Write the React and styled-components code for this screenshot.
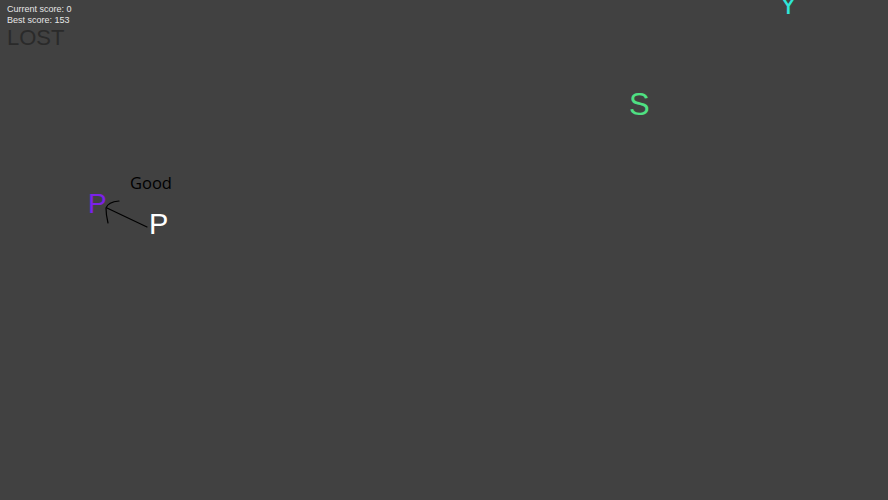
import React from 'react';
import styled, { createGlobalStyle } from 'styled-components';

const GlobalStyle = createGlobalStyle`
  html, body {
    margin: 0;
    padding: 0;
    background: #414141;
  }
  *, *::before, *::after {
    box-sizing: border-box;
  }
`;

const Stage = styled.div`
  position: relative;
  width: 888px;
  height: 500px;
  overflow: hidden;
  background: #414141;
`;

const Hud = styled.div`
  display: flex;
  flex-direction: column;
  padding: 4px 0 0 7px;
  font-family: 'Liberation Sans', Arial, sans-serif;
`;

const ScoreLine = styled.div`
  font-size: 9px;
  line-height: 11px;
  color: #e6e6e6;
`;

const Status = styled.div`
  font-size: 22px;
  line-height: 24px;
  margin-top: 0;
  color: #2a2a2a;
`;

const Letter = styled.span`
  position: absolute;
  left: ${({ x }) => x}px;
  top: ${({ y }) => y}px;
  font-family: 'Liberation Sans', Arial, sans-serif;
  font-size: ${({ size }) => size || 28}px;
  line-height: 1;
  color: ${({ color }) => color};
`;

const Label = styled.span`
  position: absolute;
  left: ${({ x }) => x}px;
  top: ${({ y }) => y}px;
  font-family: 'Open Sans', sans-serif;
  font-size: 16.5px;
  line-height: 1;
  color: #000;
`;

const Overlay = styled.svg`
  position: absolute;
  left: 0;
  top: 0;
  pointer-events: none;
`;

const App = () => (
  <>
    <GlobalStyle />
    <Stage>
      <Hud>
        <ScoreLine>Current score: 0</ScoreLine>
        <ScoreLine>Best score: 153</ScoreLine>
        <Status>LOST</Status>
      </Hud>

      <Letter x={779} y={-9} color="#2fe6d8">Y</Letter>
      <Letter x={629} y={89} size={31} color="#4fe083">S</Letter>
      <Letter x={88} y={190} color="#7b22e8">P</Letter>
      <Letter x={149} y={210} size={29} color="#ffffff">P</Letter>
      <Label x={130} y={175}>Good</Label>

      <Overlay width="888" height="500">
        <g stroke="#000" strokeWidth="1.2" fill="none" strokeLinecap="round">
          <line x1="147" y1="227" x2="107" y2="208" />
          <path d="M119 201 Q108 202 106 208 Q106 215 108 223" />
        </g>
      </Overlay>
    </Stage>
  </>
);

export default App;
